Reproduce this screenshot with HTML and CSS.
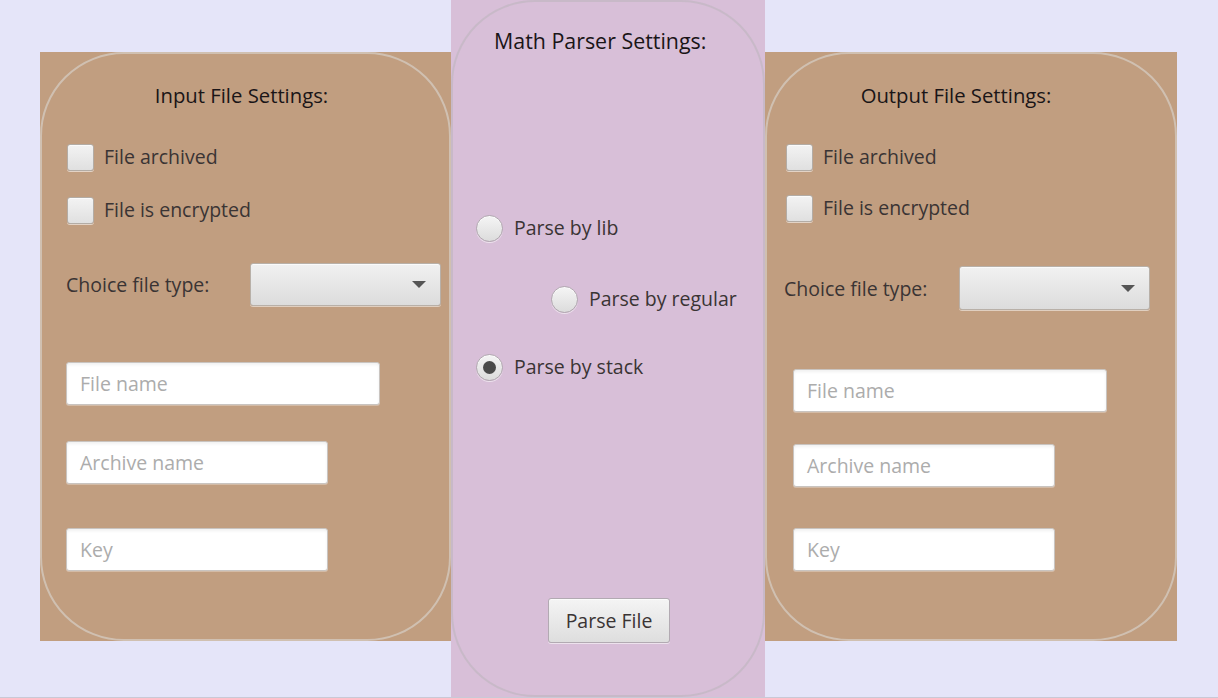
FILE: index.html
```html
<!DOCTYPE html>
<html>
<head>
<meta charset="utf-8">
<link rel="stylesheet" href="styles.css">
</head>
<body>
<div class="app">
  <section class="panel panel-in">
    <div class="frame">
      <h2 class="title">Input File Settings:</h2>
      <label class="check check-1"><span class="box"></span><span>File archived</span></label>
      <label class="check check-2"><span class="box"></span><span>File is encrypted</span></label>
      <div class="choice">
        <span class="choice-label">Choice file type:</span>
        <div class="combo"><span class="arrow"></span></div>
      </div>
      <div class="field field-file"><span class="ph">File name</span></div>
      <div class="field field-archive"><span class="ph">Archive name</span></div>
      <div class="field field-key"><span class="ph">Key</span></div>
    </div>
  </section>

  <section class="center">
    <div class="frame center-frame">
      <h2 class="title center-title">Math Parser Settings:</h2>
      <label class="radio radio-1"><span class="dot"></span><span>Parse by lib</span></label>
      <label class="radio radio-2"><span class="dot"></span><span>Parse by regular</span></label>
      <label class="radio radio-3"><span class="dot on"></span><span>Parse by stack</span></label>
      <button class="btn">Parse File</button>
    </div>
  </section>

  <section class="panel panel-out">
    <div class="frame">
      <h2 class="title">Output File Settings:</h2>
      <label class="check check-1"><span class="box"></span><span>File archived</span></label>
      <label class="check check-2"><span class="box"></span><span>File is encrypted</span></label>
      <div class="choice">
        <span class="choice-label">Choice file type:</span>
        <div class="combo"><span class="arrow"></span></div>
      </div>
      <div class="field field-file"><span class="ph">File name</span></div>
      <div class="field field-archive"><span class="ph">Archive name</span></div>
      <div class="field field-key"><span class="ph">Key</span></div>
    </div>
  </section>
</div>
</body>
</html>
```

FILE: styles.css
```css
* { box-sizing: border-box; }
html, body {
  margin: 0;
  padding: 0;
  width: 1218px;
  height: 698px;
  overflow: hidden;
  background: #e5e5f9;
  font-family: "Open Sans", "Liberation Sans", sans-serif;
  font-size: 19.5px;
  color: #3a3434;
}
.app {
  display: flex;
  align-items: flex-start;
  padding-left: 40px;
  height: 698px;
  border-bottom: 1px solid #c9c9d6;
}
.panel {
  margin-top: 52px;
  width: 411px;
  height: 589px;
  background: #c19e80;
}
.panel-out { width: 412px; }
.frame {
  height: 100%;
  border: 2px solid rgba(214, 206, 198, 0.7);
  border-radius: 84px;
  display: flex;
  flex-direction: column;
  align-items: flex-start;
}
.panel-in .frame { padding: 28px 8px 0 24px; }
.panel-out .frame { padding: 28px 25px 0 17px; }
.title {
  margin: 0;
  font-size: 20.3px;
  font-weight: normal;
  line-height: 26px;
  height: 26px;
  color: #1a1517;
  align-self: stretch;
  text-align: center;
}
.panel-in .title { padding-right: 24px; }
.panel-out .title { padding-right: 22px; }

.check, .radio {
  display: flex;
  align-items: center;
  height: 28px;
  line-height: 26px;
  white-space: nowrap;
}
.check { gap: 10px; }
.box {
  width: 27px;
  height: 27px;
  border-radius: 3px;
  border: 1px solid #b3aca5;
  background: linear-gradient(#f3f3f3, #e0e0e0);
  box-shadow: 0 1px 0 rgba(255, 255, 255, 0.55), inset 0 1px 0 #fbfbfb;
}
.panel-in .check { margin-left: 1px; }
.panel-in .check-1 { margin-top: 35px; }
.panel-in .check-2 { margin-top: 25px; }
.panel-out .check { margin-left: 2px; }
.panel-out .check-1 { margin-top: 35px; }
.panel-out .check-2 { margin-top: 23px; }

.choice {
  display: flex;
  align-items: center;
  justify-content: space-between;
  align-self: stretch;
  height: 43px;
}
.panel-in .choice { margin-top: 39px; }
.panel-out .choice { margin-top: 44px; height: 44px; }
.combo {
  width: 191px;
  height: 100%;
  border: 1px solid #b8b0a8;
  border-radius: 3px;
  background: linear-gradient(#f1f1f1, #dcdcdc);
  box-shadow: 0 1px 0 rgba(255, 255, 255, 0.5), inset 0 1px 0 #fafafa;
  display: flex;
  align-items: center;
  justify-content: flex-end;
  padding-right: 14px;
}
.arrow {
  width: 0;
  height: 0;
  border-left: 7px solid transparent;
  border-right: 7px solid transparent;
  border-top: 7px solid #555;
}

.field {
  height: 43px;
  background: #fff;
  border: 1px solid #c9c4c0;
  border-radius: 3px;
  box-shadow: inset 0 2px 3px rgba(0, 0, 0, 0.06), 0 1px 0 rgba(255, 255, 255, 0.3);
  display: flex;
  align-items: center;
  padding-left: 13px;
}
.ph { color: #acacac; line-height: 26px; }
.panel-in .field-file { margin-top: 56px; width: 314px; }
.panel-in .field-archive { margin-top: 36px; width: 262px; }
.panel-in .field-key { margin-top: 44px; width: 262px; }
.panel-out .field { margin-left: 9px; }
.panel-out .field-file { margin-top: 59px; width: 314px; }
.panel-out .field-archive { margin-top: 32px; width: 262px; }
.panel-out .field-key { margin-top: 41px; width: 262px; }

.center {
  width: 314px;
  height: 697px;
  background: #d8bfd8;
}
.center-frame {
  border: 2px solid rgba(196, 184, 196, 0.8);
  padding: 26px 0 0 23px;
}
.center-title {
  text-align: left;
  padding-left: 18px;
  font-size: 21.4px;
}
.radio { gap: 11px; }
.dot {
  width: 27px;
  height: 27px;
  border-radius: 50%;
  border: 1px solid #b1a8b0;
  background: linear-gradient(#f5f5f5, #dcdcdc);
  box-shadow: 0 1px 0 rgba(255, 255, 255, 0.55), inset 0 1px 0 #fbfbfb;
  display: flex;
  align-items: center;
  justify-content: center;
}
.dot.on::after {
  content: "";
  width: 13px;
  height: 13px;
  border-radius: 50%;
  background: #4a4a4a;
}
.radio-1 { margin-top: 160px; }
.radio-2 { margin-top: 43px; margin-left: 75px; }
.radio-3 { margin-top: 40px; }
.btn {
  margin-top: 217px;
  margin-left: 72px;
  width: 122px;
  height: 45px;
  font-family: inherit;
  font-size: 19.5px;
  color: #3a3434;
  border: 1px solid #b2aab2;
  border-radius: 3px;
  background: linear-gradient(#f4f4f4, #dedede);
  box-shadow: 0 1px 0 rgba(255, 255, 255, 0.55), inset 0 1px 0 #fbfbfb;
  padding: 0;
}
```
